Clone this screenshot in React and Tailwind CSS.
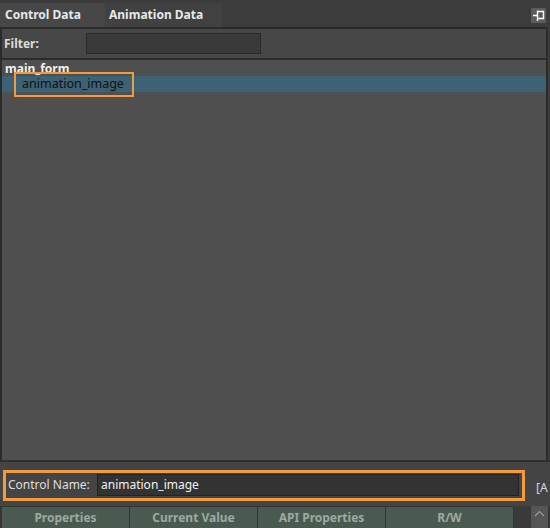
import React from "react";

const font = { fontFamily: '"Noto Sans", "Open Sans", sans-serif' };

const columns = ["Properties", "Current Value", "API Properties", "R/W"];

const FloatIcon = () => (
  <svg width="15" height="15" viewBox="0 0 15 15" className="block">
    <rect width="15" height="15" fill="#5c5c5c" />
    <path d="M2 7.5H6.5M6.5 2.5V13M6.5 3.5H12.5V10.5H6.5" stroke="#fff" strokeWidth="1.4" fill="none" />
  </svg>
);

const App = () => {
  return (
    <div
      className="w-[550px] h-[528px] bg-[#3d3d3d] flex flex-col overflow-hidden text-[12px] select-none"
      style={font}
    >
      {/* Tabs */}
      <div className="h-[27px] flex items-end pt-[3px] bg-[#3c3c3c] relative">
        <div className="w-[105px] h-[24px] bg-[#474747] pl-[5px] flex items-center font-bold text-[#e8e8e8]">
          Control Data
        </div>
        <div className="w-[117px] h-[24px] bg-[#414141] pl-[4px] flex items-center font-bold text-[#e8e8e8]">
          Animation Data
        </div>
        <div className="absolute right-[4px] top-[8px]">
          <FloatIcon />
        </div>
      </div>

      {/* Main panel */}
      <div className="flex-1 flex flex-col border-t-2 border-r-2 border-l-2 border-[#2b2b2b] mr-[2px]">
        <div className="h-[31px] bg-[#474747] border-b-2 border-[#2b2b2b] flex items-center pl-[2px]">
          <span className="font-bold text-[#dcdcdc] w-[82px]">Filter:</span>
          <div className="w-[175px] h-[21px] bg-[#3a3a3a] border border-[#2a2a2a]" />
        </div>
        <div className="flex-1 bg-[#4f4f4f] pt-[1px]">
          <div className="h-[15px] pl-[3px] flex items-center font-bold text-[#f0f0f0] leading-none">
            main_form
          </div>
          <div className="h-[16px] bg-[#3d6175] relative">
            <div className="absolute left-[12px] top-[-4px] w-[120px] h-[25px] border-2 border-[#f29b3a] pl-[6px] flex items-center text-[#111] text-[12.5px]">
              animation_image
            </div>
          </div>
        </div>
      </div>

      {/* Control name */}
      <div className="h-[46px] bg-[#444444] border-t-2 border-[#2f2f2f] flex items-center pl-[3px] pt-[2px] relative">
        <div className="w-[522px] h-[31px] border-[3px] border-[#f29b3a] flex items-center pl-[2px] pr-[3px]">
          <span className="text-[#dedede] w-[89px]">Control Name:</span>
          <div className="flex-1 h-[22px] bg-[#333333] border border-[#232323] flex items-center pl-[3px] text-[#f2f2f2]">
            animation_image
          </div>
        </div>
        <span className="absolute left-[536px] top-[17px] text-[#d8d8d8]">[A</span>
      </div>

      {/* Header row */}
      <div className="h-[22px] flex bg-[#353535] pl-[2px]">
        {columns.map((c) => (
          <div
            key={c}
            className="w-[128px] h-full bg-[#4b5a51] border-r border-t border-[#2e3832] flex items-center justify-center font-bold text-[#9ea9a2]"
          >
            {c}
          </div>
        ))}
        <div className="w-[17px] bg-[#3a3a3a]" />
        <div className="w-[17px] bg-[#555555] flex items-start justify-center pt-[4px]">
          <svg width="11" height="7" viewBox="0 0 11 7">
            <path d="M1 6L5.5 1.5L10 6" stroke="#9a9a9a" strokeWidth="1.2" fill="none" />
          </svg>
        </div>
      </div>
    </div>
  );
};

export default App;
